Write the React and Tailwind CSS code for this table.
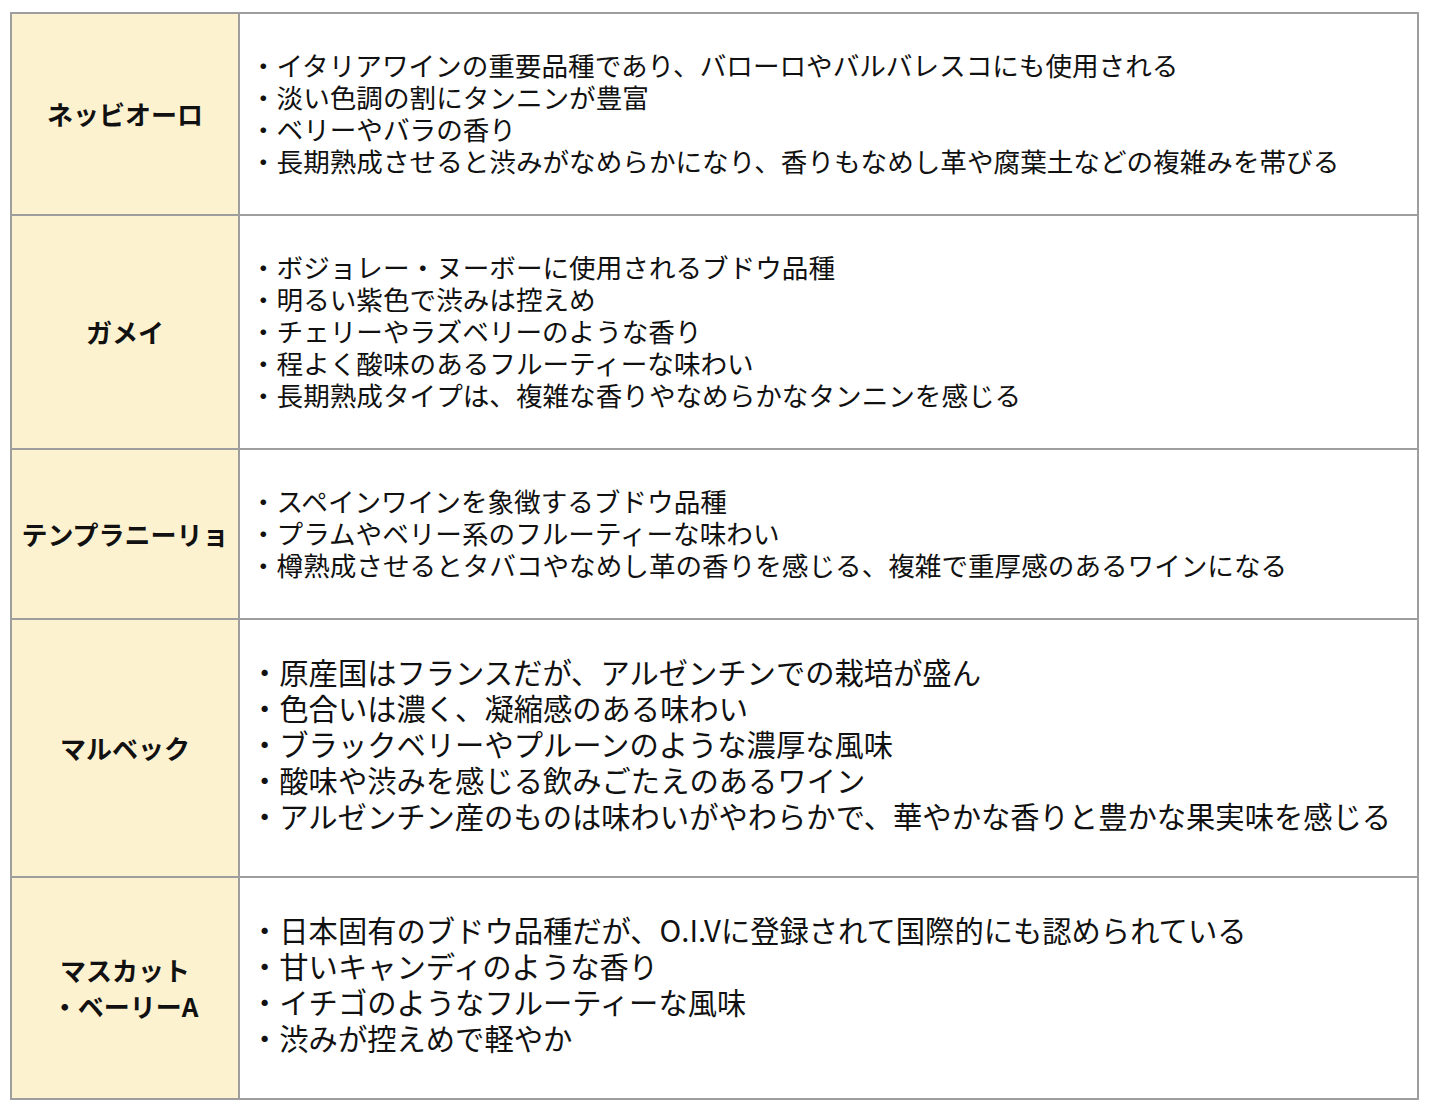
import React from 'react';

const rows = [
  {
    name: ['ネッビオーロ'],
    big: false,
    items: [
      'イタリアワインの重要品種であり、バローロやバルバレスコにも使用される',
      '淡い色調の割にタンニンが豊富',
      'ベリーやバラの香り',
      '長期熟成させると渋みがなめらかになり、香りもなめし革や腐葉土などの複雑みを帯びる',
    ],
  },
  {
    name: ['ガメイ'],
    big: false,
    items: [
      'ボジョレー・ヌーボーに使用されるブドウ品種',
      '明るい紫色で渋みは控えめ',
      'チェリーやラズベリーのような香り',
      '程よく酸味のあるフルーティーな味わい',
      '長期熟成タイプは、複雑な香りやなめらかなタンニンを感じる',
    ],
  },
  {
    name: ['テンプラニーリョ'],
    big: false,
    items: [
      'スペインワインを象徴するブドウ品種',
      'プラムやベリー系のフルーティーな味わい',
      '樽熟成させるとタバコやなめし革の香りを感じる、複雑で重厚感のあるワインになる',
    ],
  },
  {
    name: ['マルベック'],
    big: true,
    items: [
      '原産国はフランスだが、アルゼンチンでの栽培が盛ん',
      '色合いは濃く、凝縮感のある味わい',
      'ブラックベリーやプルーンのような濃厚な風味',
      '酸味や渋みを感じる飲みごたえのあるワイン',
      'アルゼンチン産のものは味わいがやわらかで、華やかな香りと豊かな果実味を感じる',
    ],
  },
  {
    name: ['マスカット', '・ベーリーA'],
    big: true,
    items: [
      '日本固有のブドウ品種だが、O.I.Vに登録されて国際的にも認められている',
      '甘いキャンディのような香り',
      'イチゴのようなフルーティーな風味',
      '渋みが控えめで軽やか',
    ],
  },
];

const Row = ({ row, first }) => (
  <div className={`flex ${first ? '' : 'border-t-2 border-[#9e9e9e]'}`}>
    <div className="w-[228px] shrink-0 bg-[#fdf2d0] border-r-2 border-[#9e9e9e] flex flex-col items-center justify-center text-[26px] leading-[36px] font-bold text-[#111]">
      {row.name.map((n, i) => (
        <span key={i}>{n}</span>
      ))}
    </div>
    <div
      className={`flex-1 bg-white pl-[10px] text-[#111] ${
        row.big
          ? 'text-[29.3px] leading-[36px] pt-[33px] pb-[43px]'
          : 'text-[26.6px] leading-[32px] pt-[35px] pb-[37px]'
      }`}
    >
      {row.items.map((t, i) => (
        <div key={i} className="whitespace-nowrap">・{t}</div>
      ))}
    </div>
  </div>
);

export default function App() {
  return (
    <div
      className="bg-white min-h-[1112px] pt-[12px] pl-[10px]"
      style={{ fontFamily: '"Noto Sans CJK JP", "Noto Sans", sans-serif' }}
    >
      <div className="w-[1409px] border-2 border-[#9e9e9e]">
        {rows.map((row, i) => (
          <Row key={i} row={row} first={i === 0} />
        ))}
      </div>
    </div>
  );
}
